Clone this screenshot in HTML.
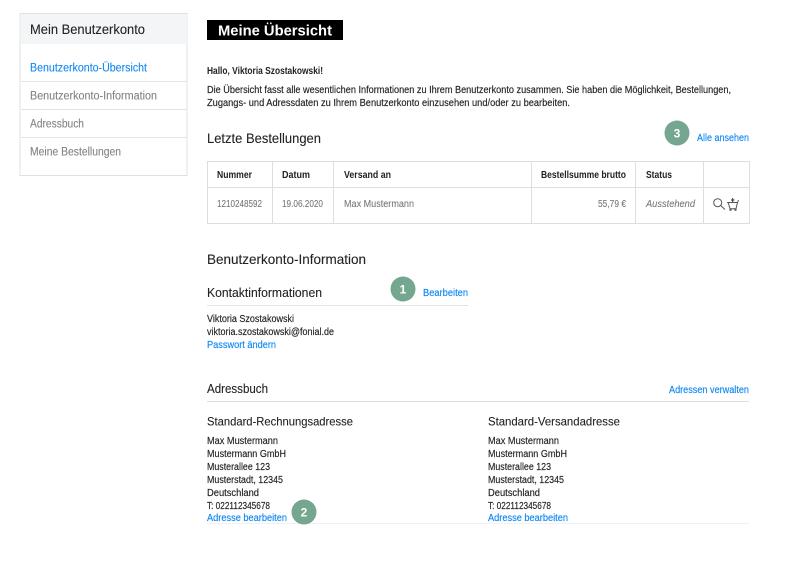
<!DOCTYPE html>
<html lang="de">
<head>
<meta charset="utf-8">
<title>Mein Benutzerkonto</title>
<style>
html,body{margin:0;padding:0;background:#fff;width:800px;height:563px;overflow:hidden}
svg{display:block;font-family:"Liberation Sans",sans-serif;filter:blur(.35px)}
.h{fill:#222;stroke:#222;stroke-width:.1}
.b{fill:#222;font-size:10px;stroke:#222;stroke-width:.15}
.g{fill:#77797c;font-size:10px;stroke:#77797c;stroke-width:.1}
.n{fill:#808285;stroke:#808285;stroke-width:.1;font-size:11.5px}
.l{fill:#0f88f2;font-size:10px;stroke:#0f88f2;stroke-width:.15}
.th{fill:#222;font-size:10px;font-weight:bold}
.c{fill:#fff;font-size:12px;font-weight:bold;text-anchor:middle}
</style>
</head>
<body>
<svg width="800" height="563" viewBox="0 0 800 563" xmlns="http://www.w3.org/2000/svg">
<!-- sidebar -->
<rect x="20" y="13.5" width="167" height="162" fill="#fff" stroke="#dfe0e2"/>
<rect x="21" y="14" width="166" height="30" fill="#f4f5f7"/>
<text x="30" y="34" class="h" font-size="14" textLength="115" lengthAdjust="spacingAndGlyphs">Mein Benutzerkonto</text>
<text x="30" y="71.5" class="n" style="fill:#0f88f2;stroke:#0f88f2" textLength="117" lengthAdjust="spacingAndGlyphs">Benutzerkonto-Übersicht</text>
<path d="M21 81.500H187M21 109.500H187M21 137.500H187" stroke="#e2e3e5"/>
<text x="30" y="99.5" class="n" textLength="127" lengthAdjust="spacingAndGlyphs">Benutzerkonto-Information</text>
<text x="30" y="127.5" class="n" textLength="54" lengthAdjust="spacingAndGlyphs">Adressbuch</text>
<text x="30" y="155.5" class="n" textLength="91" lengthAdjust="spacingAndGlyphs">Meine Bestellungen</text>

<!-- title -->
<rect x="207" y="20" width="136" height="20" fill="#000"/>
<text x="218" y="35.5" fill="#fff" font-size="15" font-weight="bold" textLength="114" lengthAdjust="spacingAndGlyphs">Meine Übersicht</text>

<text x="207" y="74" class="th" textLength="116" lengthAdjust="spacingAndGlyphs">Hallo, Viktoria Szostakowski!</text>
<text x="207" y="93" class="b" textLength="524" lengthAdjust="spacingAndGlyphs">Die Übersicht fasst alle wesentlichen Informationen zu Ihrem Benutzerkonto zusammen. Sie haben die Möglichkeit, Bestellungen,</text>
<text x="207" y="106" class="b" textLength="363" lengthAdjust="spacingAndGlyphs">Zugangs- und Adressdaten zu Ihrem Benutzerkonto einzusehen und/oder zu bearbeiten.</text>

<text x="207" y="143" class="h" font-size="14" textLength="114" lengthAdjust="spacingAndGlyphs">Letzte Bestellungen</text>
<circle cx="677" cy="133" r="12.5" fill="#74a690"/>
<text x="677" y="137.5" class="c">3</text>
<text x="697" y="141" class="l" textLength="52" lengthAdjust="spacingAndGlyphs">Alle ansehen</text>

<!-- table -->
<rect x="207.5" y="161.5" width="542" height="62" fill="#fff" stroke="#dddee0"/>
<path d="M207 187.500H750M272.500 161V224M333.500 161V224M531.500 161V224M635.500 161V224M703.500 161V224" stroke="#dddee0"/>
<text x="217" y="178" class="th" textLength="35" lengthAdjust="spacingAndGlyphs">Nummer</text>
<text x="282" y="178" class="th" textLength="28" lengthAdjust="spacingAndGlyphs">Datum</text>
<text x="344" y="178" class="th" textLength="47" lengthAdjust="spacingAndGlyphs">Versand an</text>
<text x="541" y="178" class="th" textLength="85" lengthAdjust="spacingAndGlyphs">Bestellsumme brutto</text>
<text x="646" y="178" class="th" textLength="26" lengthAdjust="spacingAndGlyphs">Status</text>
<text x="217" y="207" class="g" textLength="45" lengthAdjust="spacingAndGlyphs">1210248592</text>
<text x="282" y="207" class="g" textLength="41" lengthAdjust="spacingAndGlyphs">19.06.2020</text>
<text x="344" y="207" class="g" textLength="70" lengthAdjust="spacingAndGlyphs">Max Mustermann</text>
<text x="598" y="207" class="g" textLength="28" lengthAdjust="spacingAndGlyphs">55,79 €</text>
<text x="646" y="207" class="g" font-style="italic" textLength="49" lengthAdjust="spacingAndGlyphs">Ausstehend</text>
<g fill="none" stroke="#555" stroke-width="1">
<circle cx="717.700" cy="202.700" r="4"/>
<path d="M720.700 205.500L725 209.500"/>
<path d="M727.700 202.500H737.500L736 208.800H730L728.500 203.500ZM737.500 202.500L738.500 200"/>
<path d="M732.700 198V202M731 200H734.500" stroke="#333"/>
<circle cx="730.500" cy="209.700" r="0.7"/>
<circle cx="735.500" cy="209.700" r="0.7"/>
</g>

<!-- account info -->
<text x="207" y="264" class="h" font-size="14" textLength="159" lengthAdjust="spacingAndGlyphs">Benutzerkonto-Information</text>
<text x="207" y="297" class="h" font-size="12.5" textLength="115" lengthAdjust="spacingAndGlyphs">Kontaktinformationen</text>
<circle cx="403" cy="289" r="12.5" fill="#74a690"/>
<text x="403" y="293.500" class="c">1</text>
<text x="423" y="296" class="l" textLength="45" lengthAdjust="spacingAndGlyphs">Bearbeiten</text>
<path d="M207 305.500H468" stroke="#e2e3e5"/>
<text x="207" y="322" class="b" textLength="87" lengthAdjust="spacingAndGlyphs">Viktoria Szostakowski</text>
<text x="207" y="335" class="b" textLength="127" lengthAdjust="spacingAndGlyphs">viktoria.szostakowski@fonial.de</text>
<text x="207" y="348" class="l" textLength="69" lengthAdjust="spacingAndGlyphs">Passwort ändern</text>

<!-- address book -->
<text x="207" y="393" class="h" font-size="12.5" textLength="61" lengthAdjust="spacingAndGlyphs">Adressbuch</text>
<text x="669" y="393" class="l" textLength="80" lengthAdjust="spacingAndGlyphs">Adressen verwalten</text>
<path d="M207 401.500H749" stroke="#dddee0"/>

<text x="207" y="425.500" class="h" font-size="12" textLength="146" lengthAdjust="spacingAndGlyphs">Standard-Rechnungsadresse</text>
<text x="207" y="444" class="b" textLength="71" lengthAdjust="spacingAndGlyphs">Max Mustermann</text>
<text x="207" y="457" class="b" textLength="79" lengthAdjust="spacingAndGlyphs">Mustermann GmbH</text>
<text x="207" y="470" class="b" textLength="63" lengthAdjust="spacingAndGlyphs">Musterallee 123</text>
<text x="207" y="483" class="b" textLength="76" lengthAdjust="spacingAndGlyphs">Musterstadt, 12345</text>
<text x="207" y="496" class="b" textLength="52" lengthAdjust="spacingAndGlyphs">Deutschland</text>
<text x="207" y="509" class="b" textLength="63" lengthAdjust="spacingAndGlyphs">T: 022112345678</text>
<text x="207" y="521" class="l" textLength="80" lengthAdjust="spacingAndGlyphs">Adresse bearbeiten</text>

<text x="488" y="425.500" class="h" font-size="12" textLength="132" lengthAdjust="spacingAndGlyphs">Standard-Versandadresse</text>
<text x="488" y="444" class="b" textLength="71" lengthAdjust="spacingAndGlyphs">Max Mustermann</text>
<text x="488" y="457" class="b" textLength="79" lengthAdjust="spacingAndGlyphs">Mustermann GmbH</text>
<text x="488" y="470" class="b" textLength="63" lengthAdjust="spacingAndGlyphs">Musterallee 123</text>
<text x="488" y="483" class="b" textLength="76" lengthAdjust="spacingAndGlyphs">Musterstadt, 12345</text>
<text x="488" y="496" class="b" textLength="52" lengthAdjust="spacingAndGlyphs">Deutschland</text>
<text x="488" y="509" class="b" textLength="63" lengthAdjust="spacingAndGlyphs">T: 022112345678</text>
<text x="488" y="521" class="l" textLength="80" lengthAdjust="spacingAndGlyphs">Adresse bearbeiten</text>
<path d="M207 523.500H749" stroke="#f0f0f1"/>

<circle cx="304" cy="512" r="12.5" fill="#74a690"/>
<text x="304" y="516.500" class="c">2</text>
</svg>
</body>
</html>
